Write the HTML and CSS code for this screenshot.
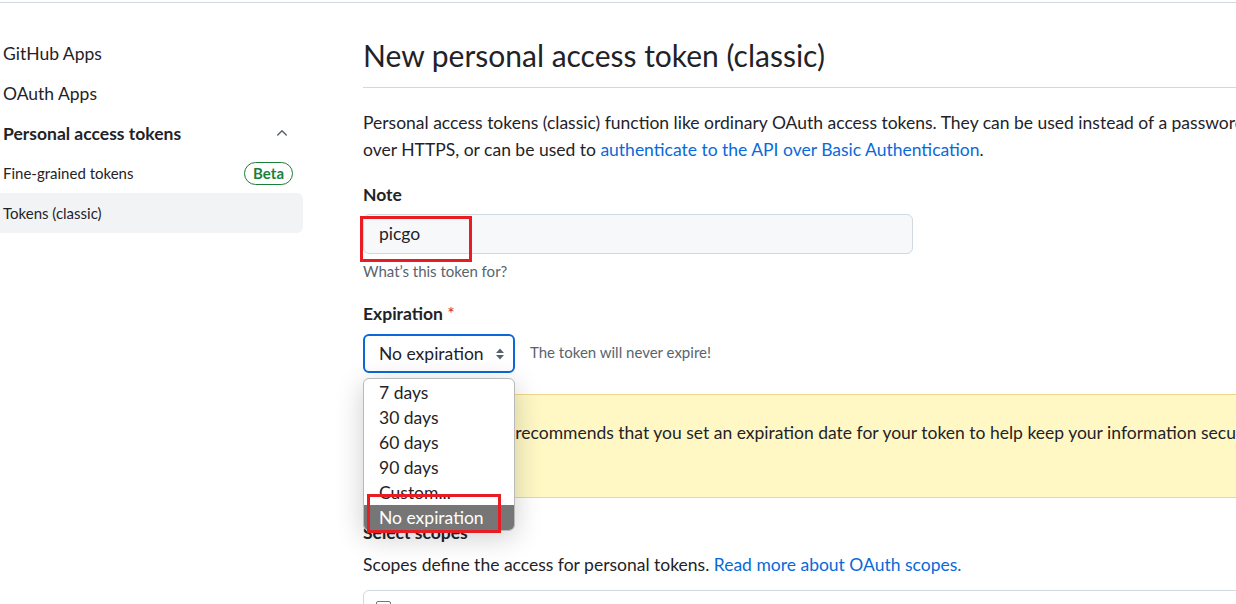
FILE: index.html
```html
<!DOCTYPE html>
<html>
<head>
<meta charset="utf-8">
<link rel="stylesheet" href="styles.css">
</head>
<body>
<div class="topline"></div>
<div class="layout">
  <nav class="sidebar">
    <a class="nav-item">GitHub Apps</a>
    <a class="nav-item">OAuth Apps</a>
    <div class="nav-item nav-group">
      <span>Personal access tokens</span>
      <svg class="chev" width="16" height="16" viewBox="0 0 16 16"><path d="M3.22 10.53a.75.75 0 0 1 0-1.06l4.25-4.25a.75.75 0 0 1 1.06 0l4.25 4.25a.75.75 0 0 1-1.06 1.06L8 6.81 4.28 10.53a.75.75 0 0 1-1.06 0Z" fill="#59636e"/></svg>
    </div>
    <a class="nav-item nav-sub">
      <span>Fine-grained tokens</span>
      <span class="beta">Beta</span>
    </a>
    <a class="nav-item nav-sub active">Tokens (classic)</a>
  </nav>
  <main class="main">
    <h1 class="title">New personal access token (classic)</h1>
    <p class="intro">Personal access tokens (classic) function like ordinary OAuth access tokens. They can be used instead of a password for Git over HTTPS, or can be used to <a class="link">authenticate to the API over Basic Authentication</a>.</p>

    <div class="field">
      <label class="label">Note</label>
      <div class="input-wrap">
        <div class="input">picgo</div>
        <div class="annot annot-note"></div>
      </div>
      <div class="hint">What’s this token for?</div>
    </div>

    <div class="field">
      <label class="label">Expiration <span class="req">*</span></label>
      <div class="exp-row">
        <div class="select-wrap">
          <div class="select">
            <span>No expiration</span>
            <svg width="10" height="14" viewBox="0 0 10 14"><path d="M5 1.5 9 6H1Z" fill="#59636e"/><path d="M5 12.5 1 8h8Z" fill="#59636e"/></svg>
          </div>
          <div class="menu">
            <div class="opt">7 days</div>
            <div class="opt">30 days</div>
            <div class="opt">60 days</div>
            <div class="opt">90 days</div>
            <div class="opt">Custom...</div>
            <div class="opt sel">No expiration</div>
          </div>
          <div class="annot annot-opt"></div>
        </div>
        <span class="exp-note">The token will never expire!</span>
      </div>
    </div>

    <div class="warn">GitHub strongly recommends that you set an expiration date for your token to help keep your information secure.</div>

    <div class="scopes">
      <div class="label">Select scopes</div>
      <p class="scopes-desc">Scopes define the access for personal tokens. <a class="link">Read more about OAuth scopes.</a></p>
      <div class="scope-box"><span class="cb"></span></div>
    </div>
  </main>
</div>
</body>
</html>
```

FILE: styles.css
```css
html, body {
  margin: 0;
  padding: 0;
  background: #fff;
  overflow: hidden;
}
body {
  font-family: "Lato", "Liberation Sans", sans-serif;
  color: #1f2328;
  font-size: 17.5px;
  width: 1236px;
  height: 604px;
}
.topline {
  margin-top: 2px;
  height: 1px;
  background: #d1d9e0;
}
.layout {
  display: flex;
}
.sidebar {
  width: 303px;
  flex: none;
  padding-top: 30px;
  display: flex;
  flex-direction: column;
}
.nav-item {
  height: 40px;
  display: flex;
  align-items: center;
  justify-content: space-between;
  padding: 0 10px 0 3px;
  color: #1f2328;
}
.nav-group {
  font-weight: 700;
}
.chev {
  margin-right: 3px;
}
.nav-sub {
  font-size: 15px;
}
.nav-sub.active {
  background: #f2f3f5;
  border-radius: 0 6px 6px 0;
}
.beta {
  border: 1px solid #1a7f37;
  color: #1a7f37;
  border-radius: 12px;
  font-weight: 700;
  font-size: 15px;
  padding: 1px 8px;
  line-height: 19px;
}
.main {
  margin-left: 60px;
  width: 900px;
  flex: none;
}
.title {
  margin: 33px 0 0;
  font-size: 30px;
  font-weight: 400;
  line-height: 39px;
  padding-bottom: 12px;
  border-bottom: 1px solid #d1d9e0;
  width: 1000px;
}
.intro {
  margin: 21px 0 0;
  line-height: 27px;
  width: 945px;
}
.link {
  color: #0969da;
}
.field {
  margin-top: 22px;
}
.field + .field {
  margin-top: 24px;
}
.label {
  display: block;
  font-weight: 700;
  line-height: 20px;
}
.req {
  color: #d1242f;
  font-weight: 400;
}
.input-wrap {
  position: relative;
  margin-top: 9px;
  width: 550px;
}
.input {
  height: 40px;
  box-sizing: border-box;
  border: 1px solid #d1d9e0;
  background: #f6f8fa;
  border-radius: 6px;
  padding: 0 15px;
  line-height: 38px;
}
.annot {
  position: absolute;
  border: 3px solid #e81c23;
  box-sizing: border-box;
}
.annot-note {
  left: -3px;
  top: 2px;
  width: 112px;
  height: 46px;
}
.hint {
  margin-top: 8px;
  font-size: 15px;
  color: #59636e;
  line-height: 18px;
}
.exp-row {
  display: flex;
  align-items: center;
  margin-top: 10px;
  gap: 15px;
}
.select-wrap {
  position: relative;
}
.select {
  width: 152px;
  height: 39px;
  box-sizing: border-box;
  border: 2px solid #0969da;
  border-radius: 6px;
  display: flex;
  align-items: center;
  justify-content: space-between;
  padding: 0 8px 0 14px;
}
.exp-note {
  font-size: 15px;
  color: #59636e;
  margin-top: -4px;
}
.menu {
  position: absolute;
  left: 0;
  top: 44px;
  width: 152px;
  box-sizing: border-box;
  background: #fff;
  border: 1px solid #b9b9b9;
  border-radius: 6px;
  overflow: hidden;
  padding-top: 1px;
  box-shadow: 0 6px 28px rgba(0,0,0,0.2);
  z-index: 5;
}
.opt {
  height: 25px;
  line-height: 25px;
  padding-left: 15px;
}
.opt.sel {
  background: #767676;
  color: #fff;
}
.annot-opt {
  left: 4px;
  top: 160px;
  width: 134px;
  height: 39px;
  z-index: 6;
}
.warn {
  margin-top: 21px;
  width: 1000px;
  height: 104px;
  box-sizing: border-box;
  background: #fff8c5;
  border: 1px solid #eed888;
  border-radius: 6px;
  padding: 26px 16px 0 25px;
  line-height: 24px;
  white-space: nowrap;
}
.scopes {
  margin-top: 25px;
}
.scopes-desc {
  margin: 10px 0 0;
  line-height: 24px;
}
.scope-box {
  margin-top: 13px;
  width: 1000px;
  height: 40px;
  border: 1px solid #d1d9e0;
  border-radius: 6px;
  padding: 10px 12px;
  box-sizing: border-box;
}
.cb {
  display: block;
  width: 13px;
  height: 13px;
  border: 1px solid #767676;
  border-radius: 2px;
}
```
